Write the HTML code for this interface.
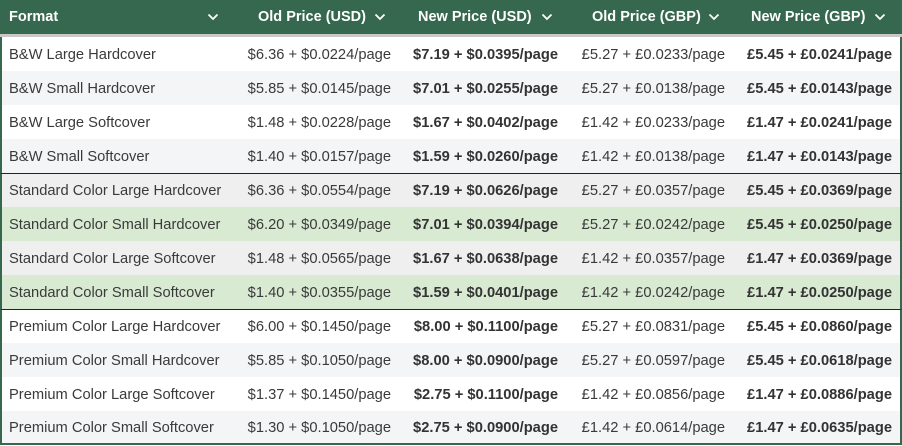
<!DOCTYPE html>
<html><head><style>
body{margin:0;width:902px;height:446px;overflow:hidden;background:#fff;font-family:"Liberation Sans",Arial,sans-serif;}
.wrap{position:relative;width:902px;height:446px;}
.hdr{position:absolute;left:0;top:0;width:902px;height:34px;background:#35684f;color:#fff;font-weight:bold;font-size:14.5px;}
.band{position:absolute;left:0;top:34px;width:902px;height:3px;background:#c8c8c8;}
.h{position:absolute;top:0;height:34px;line-height:34px;}
.chev{position:absolute;top:13px;width:12px;height:8px;}
.rows{position:absolute;left:0;top:37px;width:902px;}
.r{display:flex;height:34px;line-height:36px;font-size:14.7px;color:#3a3a3a;border-left:2px solid #35684f;border-right:2px solid #35684f;box-sizing:border-box;}
.r div{box-sizing:border-box;white-space:nowrap}
.c0{width:232px;padding-left:7px}
.c{width:167px;text-align:right;padding-right:10px}
.c.l{width:165px;padding-right:8px}
.b{font-weight:bold;color:#333}
.w{background:#fff}.g{background:#f4f5f7}.e{background:#efefef}.gr{background:#d9ead3}
.top{border-top:1px solid #222;line-height:34px}
</style></head><body><div class="wrap">
<div class="hdr">
<span class="h" style="left:9px">Format</span>
<span class="h" style="left:258px">Old Price (USD)</span>
<span class="h" style="left:418px">New Price (USD)</span>
<span class="h" style="left:592px">Old Price (GBP)</span>
<span class="h" style="left:751px">New Price (GBP)</span>
<svg class="chev" style="left:207px" viewBox="0 0 12 8"><path d="M1.5 1.5L6 6L10.5 1.5" stroke="#fff" stroke-width="1.8" fill="none"/></svg>
<svg class="chev" style="left:374px" viewBox="0 0 12 8"><path d="M1.5 1.5L6 6L10.5 1.5" stroke="#fff" stroke-width="1.8" fill="none"/></svg>
<svg class="chev" style="left:541px" viewBox="0 0 12 8"><path d="M1.5 1.5L6 6L10.5 1.5" stroke="#fff" stroke-width="1.8" fill="none"/></svg>
<svg class="chev" style="left:708px" viewBox="0 0 12 8"><path d="M1.5 1.5L6 6L10.5 1.5" stroke="#fff" stroke-width="1.8" fill="none"/></svg>
<svg class="chev" style="left:874px" viewBox="0 0 12 8"><path d="M1.5 1.5L6 6L10.5 1.5" stroke="#fff" stroke-width="1.8" fill="none"/></svg>
</div>
<div class="band"></div>
<div class="rows">
<div class="r w"><div class="c0">B&amp;W Large Hardcover</div><div class="c">$6.36 + $0.0224/page</div><div class="c b">$7.19 + $0.0395/page</div><div class="c">£5.27 + £0.0233/page</div><div class="c l b">£5.45 + £0.0241/page</div></div>
<div class="r g"><div class="c0">B&amp;W Small Hardcover</div><div class="c">$5.85 + $0.0145/page</div><div class="c b">$7.01 + $0.0255/page</div><div class="c">£5.27 + £0.0138/page</div><div class="c l b">£5.45 + £0.0143/page</div></div>
<div class="r w"><div class="c0">B&amp;W Large Softcover</div><div class="c">$1.48 + $0.0228/page</div><div class="c b">$1.67 + $0.0402/page</div><div class="c">£1.42 + £0.0233/page</div><div class="c l b">£1.47 + £0.0241/page</div></div>
<div class="r g"><div class="c0">B&amp;W Small Softcover</div><div class="c">$1.40 + $0.0157/page</div><div class="c b">$1.59 + $0.0260/page</div><div class="c">£1.42 + £0.0138/page</div><div class="c l b">£1.47 + £0.0143/page</div></div>
<div class="r e top"><div class="c0">Standard Color Large Hardcover</div><div class="c">$6.36 + $0.0554/page</div><div class="c b">$7.19 + $0.0626/page</div><div class="c">£5.27 + £0.0357/page</div><div class="c l b">£5.45 + £0.0369/page</div></div>
<div class="r gr"><div class="c0">Standard Color Small Hardcover</div><div class="c">$6.20 + $0.0349/page</div><div class="c b">$7.01 + $0.0394/page</div><div class="c">£5.27 + £0.0242/page</div><div class="c l b">£5.45 + £0.0250/page</div></div>
<div class="r e"><div class="c0">Standard Color Large Softcover</div><div class="c">$1.48 + $0.0565/page</div><div class="c b">$1.67 + $0.0638/page</div><div class="c">£1.42 + £0.0357/page</div><div class="c l b">£1.47 + £0.0369/page</div></div>
<div class="r gr"><div class="c0">Standard Color Small Softcover</div><div class="c">$1.40 + $0.0355/page</div><div class="c b">$1.59 + $0.0401/page</div><div class="c">£1.42 + £0.0242/page</div><div class="c l b">£1.47 + £0.0250/page</div></div>
<div class="r w top"><div class="c0">Premium Color Large Hardcover</div><div class="c">$6.00 + $0.1450/page</div><div class="c b">$8.00 + $0.1100/page</div><div class="c">£5.27 + £0.0831/page</div><div class="c l b">£5.45 + £0.0860/page</div></div>
<div class="r g"><div class="c0">Premium Color Small Hardcover</div><div class="c">$5.85 + $0.1050/page</div><div class="c b">$8.00 + $0.0900/page</div><div class="c">£5.27 + £0.0597/page</div><div class="c l b">£5.45 + £0.0618/page</div></div>
<div class="r w"><div class="c0">Premium Color Large Softcover</div><div class="c">$1.37 + $0.1450/page</div><div class="c b">$2.75 + $0.1100/page</div><div class="c">£1.42 + £0.0856/page</div><div class="c l b">£1.47 + £0.0886/page</div></div>
<div class="r g" style="border-bottom:2px solid #35684f;line-height:34px"><div class="c0">Premium Color Small Softcover</div><div class="c">$1.30 + $0.1050/page</div><div class="c b">$2.75 + $0.0900/page</div><div class="c">£1.42 + £0.0614/page</div><div class="c l b">£1.47 + £0.0635/page</div></div>
</div>
</div></body></html>
